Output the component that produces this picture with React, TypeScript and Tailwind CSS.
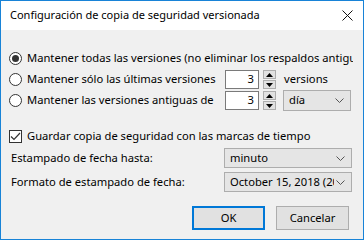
import React from 'react';

const Radio = ({ checked }: { checked?: boolean }) => (
  <span className="flex h-[13px] w-[13px] shrink-0 items-center justify-center rounded-full border border-[#333333] bg-white">
    {checked && <span className="h-[7px] w-[7px] rounded-full bg-[#333333]" />}
  </span>
);

const Chevron = () => (
  <svg width="9" height="5" viewBox="0 0 9 5" className="shrink-0">
    <path d="M0.5 0.5 L4.5 4.5 L8.5 0.5" fill="none" stroke="#555555" strokeWidth="1" />
  </svg>
);

const Combo = ({ value, className }: { value: string; className: string }) => (
  <div
    className={`flex items-center justify-between gap-[2px] overflow-hidden border border-[#adadad] bg-[#e5e5e5] pl-[5px] pr-[6px] ${className}`}
  >
    <span className="overflow-hidden whitespace-nowrap">{value}</span>
    <Chevron />
  </div>
);

const Spinner = ({ value }: { value: string }) => (
  <div className="flex items-center gap-[4px]">
    <div className="flex h-[19px] w-[34px] items-center justify-end border border-[#7a7a7a] bg-white pr-[4px]">
      {value}
    </div>
    <div className="flex h-[19px] w-[13px] flex-col gap-px">
      <div className="flex flex-1 items-center justify-center border border-[#adadad] bg-[#e1e1e1]">
        <svg width="7" height="4" viewBox="0 0 7 4">
          <path d="M3.5 0 L7 4 L0 4 Z" fill="#000" />
        </svg>
      </div>
      <div className="flex flex-1 items-center justify-center border border-[#adadad] bg-[#e1e1e1]">
        <svg width="7" height="4" viewBox="0 0 7 4">
          <path d="M0 0 L7 0 L3.5 4 Z" fill="#000" />
        </svg>
      </div>
    </div>
  </div>
);

export default function App() {
  return (
    <div
      className="flex h-[240px] w-[364px] flex-col overflow-hidden border border-[#1883d7] bg-[#f0f0f0] text-[11.2px] text-black"
      style={{ fontFamily: '"Noto Sans", "Segoe UI", sans-serif' }}
    >
      <div className="flex h-[29px] shrink-0 items-center justify-between bg-white pl-[9px] pr-[10px]">
        <span className="text-[11px]">Configuración de copia de seguridad versionada</span>
        <svg width="11" height="11" viewBox="0 0 11 11">
          <path d="M0.5 0.5 L10.5 10.5 M10.5 0.5 L0.5 10.5" stroke="#111" strokeWidth="1" />
        </svg>
      </div>

      <div className="flex flex-1 flex-col px-[8px] pt-[18px]">
        <div className="flex h-[21px] w-[344px] items-center gap-[5px] overflow-hidden whitespace-nowrap">
          <Radio checked />
          <span>Mantener todas las versiones (no eliminar los respaldos antiguos)</span>
        </div>
        <div className="flex h-[21px] items-center">
          <div className="flex w-[216px] items-center gap-[5px]">
            <Radio />
            <span>Mantener sólo las últimas versiones</span>
          </div>
          <Spinner value="3" />
          <span className="ml-[8px]">versions</span>
        </div>
        <div className="flex h-[21px] items-center">
          <div className="flex w-[216px] items-center gap-[5px]">
            <Radio />
            <span>Mantener las versiones antiguas de</span>
          </div>
          <Spinner value="3" />
          <Combo value="día" className="ml-[7px] h-[21px] w-[68px]" />
        </div>

        <div className="mt-[14px] flex h-[22px] items-center gap-[5px]">
          <span className="flex h-[13px] w-[13px] items-center justify-center border border-[#333333] bg-white">
            <svg width="11" height="9" viewBox="0 0 11 9">
              <path d="M1 4.5 L4 7.5 L10 1" fill="none" stroke="#333333" strokeWidth="1.2" />
            </svg>
          </span>
          <span>Guardar copia de seguridad con las marcas de tiempo</span>
        </div>

        <div className="mt-px flex h-[20px] items-center">
          <span className="ml-[2px] w-[213px]">Estampado de fecha hasta:</span>
          <Combo value="minuto" className="h-[20px] w-[128px]" />
        </div>
        <div className="mt-[4px] flex h-[20px] items-center">
          <span className="ml-[2px] w-[213px]">Formato de estampado de fecha:</span>
          <Combo value="October 15, 2018 (2018-10-15)" className="h-[20px] w-[128px]" />
        </div>

        <div className="mt-[14px] flex justify-end gap-[11px] pr-[6px]">
          <button className="h-[24px] w-[73px] border-2 border-[#0078d7] bg-[#e1e1e1]">OK</button>
          <button className="h-[24px] w-[73px] border border-[#adadad] bg-[#e1e1e1]">Cancelar</button>
        </div>
      </div>
    </div>
  );
}
